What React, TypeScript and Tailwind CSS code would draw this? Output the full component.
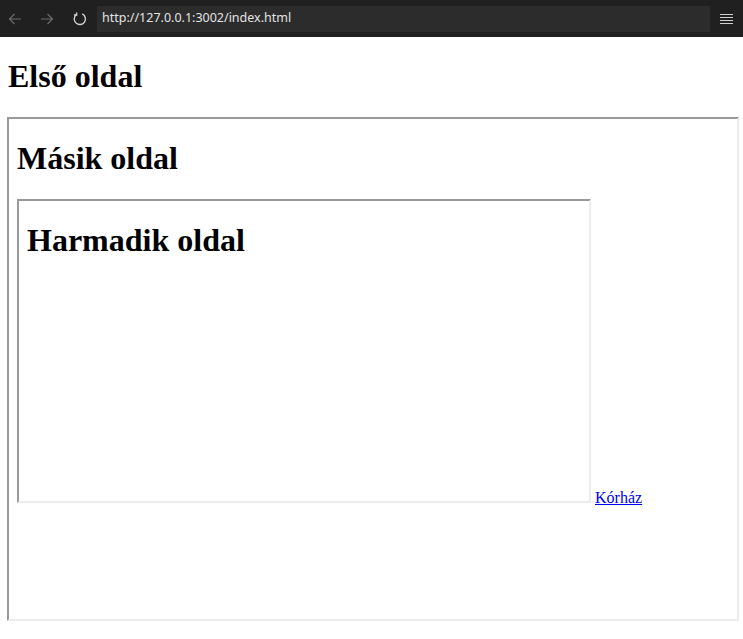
import React from 'react';

const serif = { fontFamily: '"Liberation Serif", "Times New Roman", serif' };

const BrowserBar = () => (
  <div className="flex h-[37px] items-center bg-[#202020]">
    <div className="flex w-[97px] items-center">
      {/* back */}
      <svg width="16" height="16" viewBox="0 0 16 16" className="ml-[7px]" fill="none" stroke="#6b6b6b" strokeWidth="1.2">
        <path d="M14 8H2.5M7.5 3L2.5 8l5 5" />
      </svg>
      {/* forward */}
      <svg width="16" height="16" viewBox="0 0 16 16" className="ml-[16px]" fill="none" stroke="#6b6b6b" strokeWidth="1.2">
        <path d="M2 8h11.5M8.5 3l5 5-5 5" />
      </svg>
      {/* reload */}
      <svg width="16" height="16" viewBox="0 0 16 16" className="ml-[17px]" fill="none" stroke="#d0d0d0" strokeWidth="1.4">
        <path d="M10.2 2.9A5.6 5.6 0 1 1 4.3 3.6" />
        <path d="M4.6 1.4v2.6H2" />
      </svg>
    </div>
    <div className="flex h-[26px] w-[613px] items-center bg-[#2c2c2c] pl-[5px]">
      <span className="text-[12.5px] text-[#e3e3e3]" style={{ fontFamily: '"Noto Sans", "Open Sans", sans-serif' }}>
        http://127.0.0.1:3002/index.html
      </span>
    </div>
    <div className="ml-[10px] flex w-[13px] flex-col gap-[2px]">
      <div className="h-px bg-[#d0d0d0]" />
      <div className="h-px bg-[#d0d0d0]" />
      <div className="h-px bg-[#d0d0d0]" />
      <div className="h-px bg-[#d0d0d0]" />
    </div>
  </div>
);

const frameBorder = 'border-2 border-t-[#999999] border-l-[#999999] border-b-[#ececec] border-r-[#ececec]';

export default function App() {
  return (
    <div className="h-[639px] overflow-hidden bg-white text-black" style={serif}>
      <BrowserBar />
      <div className="px-[7px]">
        <h1 className="ml-px mb-[22px] mt-[21px] text-[32px] font-bold leading-[37px]">Első oldal</h1>
        <div className={`h-[504px] w-[732px] overflow-hidden ${frameBorder} px-[8px]`}>
          <h1 className="mb-[22px] mt-[21px] text-[32px] font-bold leading-[37px]">Másik oldal</h1>
          <div className="text-[16px] leading-[18px]">
            <div className={`inline-block h-[304px] w-[574px] overflow-hidden align-baseline ${frameBorder} px-[8px]`}>
              <h1 className="mt-[21px] text-[32px] font-bold leading-[37px]">Harmadik oldal</h1>
            </div>{' '}
            <a href="#" className="text-[#0000ee] underline">
              Kórház
            </a>
          </div>
        </div>
      </div>
    </div>
  );
}
